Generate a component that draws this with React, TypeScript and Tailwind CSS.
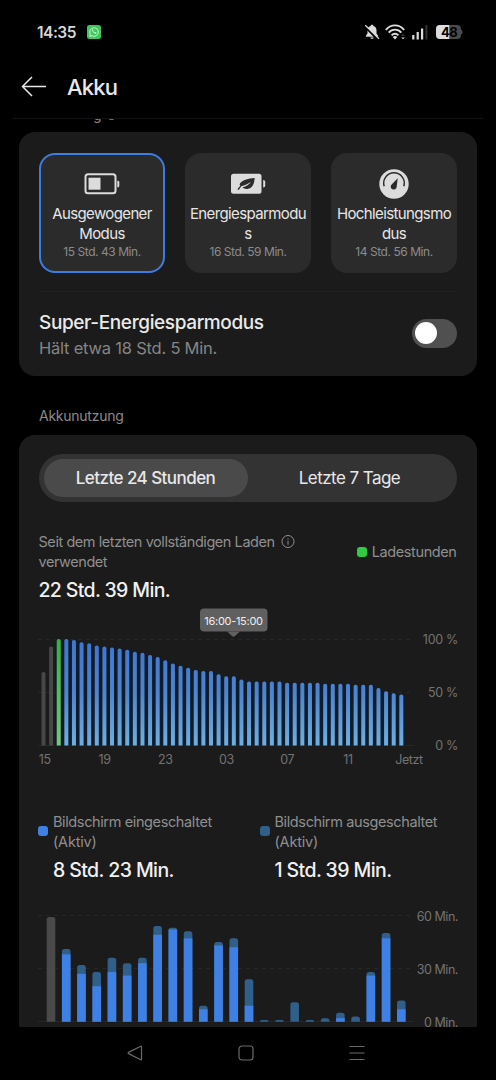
import React from "react";

// Battery level per half hour, oldest first
const levels = [
  69, 93, 100, 100, 99, 97, 96, 94, 93, 92, 91, 90, 88, 87, 85, 83, 80, 77, 75, 73, 71, 70, 70, 67,
  65, 65, 62, 60, 60, 60, 60, 60, 59, 59, 59, 59, 59, 58, 58, 58, 58, 57, 57, 57, 54, 51, 49, 48,
];

// Minutes per hour: [total, screen on]
const usage = [
  [41, 38], [32, 27], [28, 20], [36, 28], [33, 26], [36, 33], [54, 49], [53, 52],
  [51, 47], [9, 7], [45, 43], [47, 42], [24, 9], [1, 0], [1, 0], [11, 0],
  [1, 0], [2, 0], [5, 2], [3, 0], [28, 26], [50, 47], [12, 7],
];

const hours = [
  { x: 6.8, label: "15" },
  { x: 66.5, label: "19" },
  { x: 127.3, label: "23" },
  { x: 188.5, label: "03" },
  { x: 249.3, label: "07" },
  { x: 310, label: "11" },
  { x: 371, label: "Jetzt" },
];

const topRounded = (x: number, y: number, w: number, bottom: number, r: number) => {
  const k = Math.min(r, bottom - y);
  return `M${x} ${bottom}V${y + k}q0 ${-k} ${k} ${-k}h${w - 2 * k}q${k} 0 ${k} ${k}V${bottom}z`;
};

const StatusBar: React.FC = () => (
  <div className="flex h-16 shrink-0 items-center justify-between pl-[37px] pr-[34px]">
    <div className="flex items-center">
      <span className="w-[50px] pt-px text-[15.5px] font-semibold leading-none tracking-[-0.5px] text-[#d6d6d6]">
        14:35
      </span>
      <svg className="h-[14px] w-[14px]" viewBox="0 0 14 14" fill="none">
        <rect width="14" height="14" rx="2.5" fill="#3fc75c" />
        <path d="M2.7 11.3l.6-2.2A4.3 4.3 0 1 1 5 10.8z" stroke="#d9f7de" strokeWidth="0.9" />
        <path d="M5.3 4.6c-.5.9.3 2.3 1.2 3.1.9.8 2.1 1.3 2.8.7l.1-.8-1.2-.6-.6.5c-.7-.3-1.2-.8-1.5-1.5l.4-.6-.5-1.1z" fill="#d9f7de" />
      </svg>
    </div>
    <div className="flex items-center">
      <svg className="h-4 w-4" viewBox="0 0 16 16" fill="#dcdcdc">
        <path d="M8 .8c.8 0 1.3.4 1.3 1.1 2 .5 3.2 2.2 3.2 4.3v3.2l1.6 2.4v.9H1.9v-.9l1.6-2.4V6.2C3.5 4.1 4.7 2.4 6.7 1.9 6.7 1.2 7.2.8 8 .8z" />
        <path d="M6.3 13.5h3.4c-.2.9-.8 1.4-1.7 1.4s-1.5-.5-1.7-1.4z" />
        <path d="M.2 2L14 15.8" stroke="#000" strokeWidth="2" />
        <path d="M1.3 1.2L15 14.8" stroke="#dcdcdc" strokeWidth="1.2" />
      </svg>
      <svg className="ml-[5px] h-4 w-5" viewBox="0 0 20 16" fill="none" stroke="#dcdcdc" strokeWidth="1.8">
        <path d="M.8 6C5.7-.1 14.3-.1 19.2 6" />
        <path d="M3.7 8.7C7.1 4.7 12.9 4.7 16.3 8.7" />
        <path d="M6.6 11.3C8.6 9.2 11.4 9.2 13.4 11.3" />
        <path d="M7.6 12.9q2.4-1.8 4.8 0L10 15.4z" fill="#dcdcdc" stroke="none" />
        <path d="M16.2 11.8l1.8-1.8 1.8 1.8z" fill="#444" stroke="none" />
        <path d="M16.2 13.4h3.6L18 15.2z" fill="#dcdcdc" stroke="none" />
      </svg>
      <svg className="ml-[7px] h-4 w-4" viewBox="0 0 16 16" fill="#dcdcdc">
        <rect x="0.2" y="11" width="2.2" height="4.5" />
        <rect x="4.6" y="8" width="2.2" height="7.5" />
        <rect x="9" y="4.5" width="2.2" height="11" />
        <rect x="13.4" y="1" width="2" height="14.5" fill="#333" />
      </svg>
      <div className="relative ml-[8px] h-[14px] w-[26px]">
        <svg className="absolute inset-0" width="27" height="14" viewBox="0 0 27 14">
          <rect width="25" height="14" rx="4" fill="#4a4a4a" />
          <path d="M4 0h9.2v14H4a4 4 0 0 1-4-4V4a4 4 0 0 1 4-4z" fill="#dcdcdc" />
          <path d="M25 4.5q1.6.6 1.6 2.5T25 9.5z" fill="#4a4a4a" />
        </svg>
        <span className="relative block text-center text-[13px] font-bold leading-[14px] tracking-[-0.7px] text-black">
          48
        </span>
      </div>
    </div>
  </div>
);

const BatteryIcon = () => (
  <svg width="36" height="22" viewBox="0 0 36 22" fill="#dcdcdc">
    <rect x="1.5" y="1.2" width="30" height="19" rx="2.5" fill="none" stroke="#dcdcdc" strokeWidth="2" />
    <rect x="4.5" y="4.7" width="12" height="12" />
    <path d="M33.3 7.5q2 .2 2 1.5v4q0 1.2-2 1.5z" />
  </svg>
);

const LeafBatteryIcon = () => (
  <svg width="36" height="22" viewBox="0 0 36 22" fill="#dcdcdc">
    <rect x="1" y="0.7" width="30.5" height="20" rx="2.5" />
    <path d="M33.2 7q2 .2 2 1.5v4.5q0 1.2-2 1.5z" />
    <path d="M24.7 5c-.5 6.7-2.7 10.4-7.2 10.9-2.3.2-4-.4-5.1-1.4 4-1.4 6.5-3 8.6-5.5-3 2-6.3 3.3-9.7 4.3L8.7 16.9l-1.3-.6 3-3.7c-2-1 .5-6.6 14.3-7.6z" fill="#2b2b2b" />
  </svg>
);

const GaugeIcon = () => (
  <svg width="30" height="30" viewBox="0 0 30 30" fill="none">
    <circle cx="15" cy="15" r="14.7" fill="#dcdcdc" />
    <path d="M5.2 17.3A10.3 10.3 0 1 1 24.8 17.3" stroke="#2b2b2b" strokeWidth="1.5" />
    <path d="M18.7 9.3l-1 8.1a3 3 0 1 1-4.8-2.2z" fill="#2b2b2b" />
  </svg>
);

type ModeProps = { icon: React.ReactNode; lines: string[]; time: string; active?: boolean };

const ModeCard: React.FC<ModeProps> = ({ icon, lines, time, active }) => (
  <div
    className={`flex h-[120px] min-w-0 flex-1 flex-col items-center rounded-2xl border-2 bg-[#2b2b2b] pt-[14px] ${
      active ? "border-[#3d7de2]" : "border-[#2b2b2b]"
    }`}
  >
    <div className="flex h-[30px] items-center">{icon}</div>
    <div className="mt-[5px] text-center text-[15px] leading-5 tracking-[-0.62px] text-[#e6e6e6]">
      {lines.map((line) => (
        <div key={line} className="whitespace-nowrap">{line}</div>
      ))}
    </div>
    <div className="text-[12px] leading-4 tracking-[-0.45px] text-[#8c8c8c]">{time}</div>
  </div>
);

const GridLines: React.FC<{ ys: number[]; bottom: number }> = ({ ys, bottom }) => (
  <>
    {ys.map((y) => (
      <path key={y} d={`M0 ${y}H376`} stroke="#272727" strokeDasharray="4 4" />
    ))}
    <path d={`M0 ${bottom}H376`} stroke="#262626" />
  </>
);

const LevelChart: React.FC = () => (
  <svg className="block" width="420" height="162" viewBox="0 0 420 162">
    <defs>
      <linearGradient id="level" gradientUnits="userSpaceOnUse" x1="0" y1="33" x2="0" y2="139">
        <stop offset="0" stopColor="#3f75cf" />
        <stop offset="0.5" stopColor="#4c84d0" />
        <stop offset="1" stopColor="#6eafe0" />
      </linearGradient>
      <linearGradient id="charge" gradientUnits="userSpaceOnUse" x1="0" y1="33" x2="0" y2="139">
        <stop offset="0" stopColor="#31b43a" />
        <stop offset="1" stopColor="#72ca7b" />
      </linearGradient>
    </defs>
    <GridLines ys={[33.5, 86.5]} bottom={139.5} />
    {levels.map((v, i) => (
      <g key={i}>
        {i > 1 && <path d={topRounded(i * 7.613 + 1.7, 139.5 - v * 1.065, 7.6, 139.5, 2)} fill="#111c2a" />}
        <path
          d={topRounded(i * 7.613 + 3.5, 139.5 - v * 1.065, 4, 139.5, 1.8)}
          fill={i < 2 ? "#474747" : i === 2 ? "url(#charge)" : "url(#level)"}
        />
      </g>
    ))}
    <rect x="162" y="2.5" width="67.5" height="23" rx="4" fill="#606060" />
    <path d="M189 25.5h13l-5 4.6q-1.5 1.2-3 0z" fill="#606060" />
    <text x="195.5" y="18.5" textAnchor="middle" fontSize="11" letterSpacing="-0.3" fill="#eeeeee">16:00-15:00</text>
    <g fontSize="12.5" letterSpacing="-0.3" fill="#737373" textAnchor="end">
      <text x="420" y="38">100 %</text>
      <text x="420" y="91">50 %</text>
      <text x="420" y="144">0 %</text>
    </g>
    <g fontSize="12.5" letterSpacing="-0.4" fill="#737373" textAnchor="middle">
      {hours.map((h) => (
        <text key={h.label} x={h.x} y="158">{h.label}</text>
      ))}
    </g>
  </svg>
);

const UsageChart: React.FC = () => (
  <svg className="block" width="420" height="122" viewBox="0 0 420 122">
    <GridLines ys={[10.5, 63.5]} bottom={116.5} />
    <path d={topRounded(8.7, 12, 8.6, 116.7, 2.5)} fill="#4a4a4a" />
    {usage.map(([total, on], i) => {
      const x = (i + 1) * 15.23 + 8.7;
      return (
        <g key={i}>
          <path d={topRounded(x, 116.7 - total * 1.773, 8.6, 116.7, 2.5)} fill="#305f8a" />
          {on > 0 && <rect x={x} y={116.7 - on * 1.773} width="8.6" height={on * 1.773} fill="#3f80e4" />}
        </g>
      );
    })}
    <g fontSize="12.5" letterSpacing="-0.45" fill="#737373" textAnchor="end">
      <text x="420" y="15.5">60 Min.</text>
      <text x="420" y="68.5">30 Min.</text>
      <text x="420" y="121.5">0 Min.</text>
    </g>
  </svg>
);

type LegendProps = { dot: string; title: string; value: string };

const Legend: React.FC<LegendProps> = ({ dot, title, value }) => (
  <div className="flex w-[221.5px] shrink-0 gap-[5px]">
    <span className={`mt-[14px] h-[10px] w-[10px] shrink-0 rounded-[3px] ${dot}`} />
    <div>
      <div className="whitespace-nowrap text-[14.5px] leading-5 tracking-[-0.38px] text-[#8f8f8f]">{title}</div>
      <div className="text-[14.5px] leading-5 tracking-[-0.2px] text-[#8f8f8f]">(Aktiv)</div>
      <div className="mt-1 text-[19.5px] font-medium leading-7 tracking-[-0.6px] text-[#f0f0f0]">{value}</div>
    </div>
  </div>
);

const App: React.FC = () => {
  return (
    <div className="flex h-[1080px] w-[496px] flex-col overflow-hidden bg-black font-['Inter','Roboto',sans-serif]">
      <StatusBar />

      {/* Title bar */}
      <header className="flex h-[54px] shrink-0 items-center pb-[8px] pl-[21px]">
        <svg width="26" height="22" viewBox="0 0 26 22" fill="none" stroke="#e8e8e8" strokeWidth="1.5">
          <path d="M25 10.5H1.5M11 1L1.5 10.5l9.5 9.5" />
        </svg>
        <h1 className="ml-[20px] text-[22px] font-medium leading-7 tracking-[-0.8px] text-[#e8e8e8]">Akku</h1>
      </header>

      {/* Row scrolled under the title bar */}
      <div className="mx-[13px] h-[14px] shrink-0 overflow-hidden border-t border-[#111111]">
        <div className="-mt-[12px] flex items-start pl-[80px] text-[14px] leading-4 text-[#8c8c8c]">
          <span>g</span>
          <span className="ml-[4px] mt-[2px] h-[11px] w-[11px] rounded-full border border-[#8c8c8c]" />
        </div>
      </div>

      {/* Power modes */}
      <section className="mx-[19px] h-[244px] shrink-0 rounded-2xl bg-[#1b1b1b] px-5 pt-[21px]">
        <div className="flex gap-5">
          <ModeCard active icon={<BatteryIcon />} lines={["Ausgewogener", "Modus"]} time="15 Std. 43 Min." />
          <ModeCard icon={<LeafBatteryIcon />} lines={["Energiesparmodu", "s"]} time="16 Std. 59 Min." />
          <ModeCard icon={<GaugeIcon />} lines={["Hochleistungsmo", "dus"]} time="14 Std. 56 Min." />
        </div>
        <div className="mt-[18px] flex items-center justify-between border-t border-[#202020] pt-[16px]">
          <div>
            <div className="pt-px text-[19px] font-medium leading-[27px] tracking-[-0.38px] text-[#eaeaea]">
              Super-Energiesparmodus
            </div>
            <div className="text-[16.5px] leading-6 tracking-[-0.22px] text-[#858585]">Hält etwa 18 Std. 5 Min.</div>
          </div>
          <div className="mb-[2px] flex h-[29px] w-[45px] items-center rounded-full bg-[#505050] px-[3px]">
            <span className="h-[22px] w-[22px] rounded-full bg-white" />
          </div>
        </div>
      </section>

      <h2 className="flex h-[59px] shrink-0 items-end pb-[9px] pl-[39px] text-[14px] leading-5 tracking-[-0.25px] text-[#8a8a8a]">
        Akkunutzung
      </h2>

      {/* Usage */}
      <section className="mx-[19px] h-[592px] shrink-0 overflow-hidden rounded-t-2xl bg-[#1b1b1b] pl-[19.5px] pt-[19px]">
        <div className="flex h-12 w-[418px] items-center rounded-full bg-[#333333] px-[5px] text-[17px] tracking-[-0.55px] text-[#e8e8e8]">
          <div className="flex h-[38px] w-[204px] items-center justify-center rounded-full bg-[#4a4a4a] pt-px font-medium">
            Letzte 24 Stunden
          </div>
          <div className="flex-1 pt-px text-center">Letzte 7 Tage</div>
        </div>

        <div className="mt-[30px] flex w-[418px] items-start justify-between text-[14.5px] leading-5 tracking-[-0.44px] text-[#8f8f8f]">
          <div>
            <div className="flex items-center">
              Seit dem letzten vollständigen Laden
              <svg className="ml-[6px]" width="14" height="14" viewBox="0 0 14 14" fill="none" stroke="#8f8f8f">
                <circle cx="7" cy="6.500" r="6" />
                <path d="M7 5.700v4M7 3.300v1.200" />
              </svg>
            </div>
            <div>verwendet</div>
          </div>
          <div className="mt-[10px] flex items-center gap-[5px] tracking-[-0.4px]">
            <span className="h-[10px] w-[10px] rounded-[3px] bg-[#2ecc40]" />
            Ladestunden
          </div>
        </div>
        <div className="mt-1 text-[19.5px] font-medium leading-7 tracking-[-0.65px] text-[#f0f0f0]">22 Std. 39 Min.</div>

        <div className="-ml-[0.5px] mt-[2px]">
          <LevelChart />
        </div>

        <div className="-ml-[0.5px] mt-[44px] flex">
          <Legend dot="bg-[#3f80e4]" title="Bildschirm eingeschaltet" value="8 Std. 23 Min." />
          <Legend dot="bg-[#305f8a]" title="Bildschirm ausgeschaltet" value="1 Std. 39 Min." />
        </div>

        <div className="-ml-[0.5px] mt-[21px]">
          <UsageChart />
        </div>
      </section>

      {/* System navigation */}
      <nav className="flex h-[53px] shrink-0 items-center justify-center gap-[95px] pb-px pr-[5px] text-[#6a6a6a]">
        <svg width="16" height="16" viewBox="0 0 16 16" fill="none" stroke="currentColor" strokeWidth="1.2" strokeLinejoin="round">
          <path d="M14.5 1.7v12.6q0 .7-.7.4L1.5 8.6q-1-.6 0-1.2L13.8 1.3q.7-.3.7.4z" />
        </svg>
        <svg width="16" height="16" viewBox="0 0 16 16" fill="none" stroke="currentColor" strokeWidth="1.2">
          <rect x="1" y="1" width="14" height="14" rx="3" />
        </svg>
        <svg width="16" height="16" viewBox="0 0 16 16" fill="none" stroke="currentColor" strokeWidth="1.2">
          <path d="M.5 1.5h15M.5 8h15M.5 14.5h15" />
        </svg>
      </nav>
    </div>
  );
};

export default App;
